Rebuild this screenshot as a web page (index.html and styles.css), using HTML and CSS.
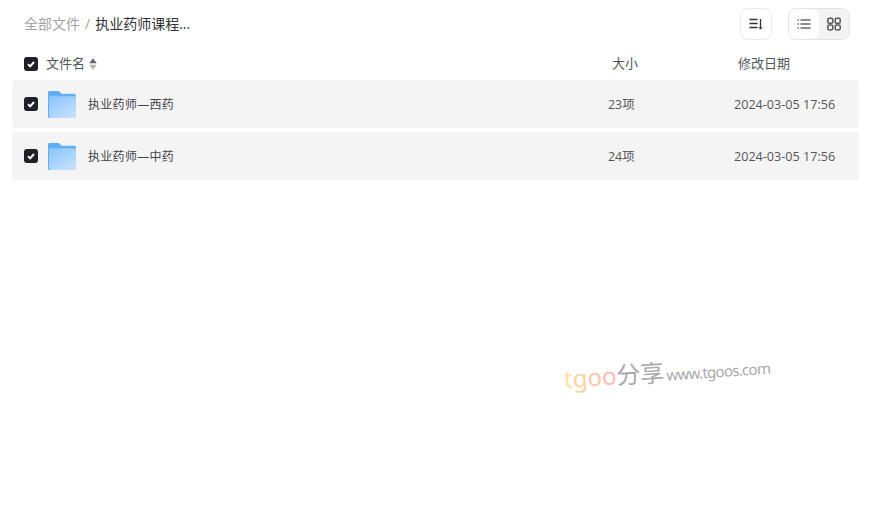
FILE: index.html
```html
<!DOCTYPE html>
<html lang="zh-CN">
<head>
<meta charset="utf-8">
<title>执业药师课程</title>
<link rel="stylesheet" href="styles.css">
</head>
<body>
<main class="page">
  <header class="toolbar">
    <nav class="crumbs">
      <span class="crumb-root">全部文件</span>
      <span class="crumb-sep">/</span>
      <span class="crumb-current">执业药师课程...</span>
    </nav>
    <div class="tools">
      <button class="tool-btn">
        <svg width="16" height="16" viewBox="0 0 16 16" fill="none" stroke="#33333b" stroke-width="1.3"><path d="M1.500 3.500h8M1.500 7.500h8M1.500 11.500h8"/><path d="M12.500 3v10"/><path d="M10.800 11.200 12.500 13.200 14.200 11.200" stroke-width="1"/></svg>
      </button>
      <div class="view-group">
        <span class="view-item view-on">
          <svg width="14" height="14" viewBox="0 0 14 14" fill="none" stroke="#1f1f27" stroke-width="1.2"><path d="M3.500 3h10M3.500 7h10M3.500 11h10"/><path d="M.5 3h1.500M.5 7h1.500M.5 11h1.500"/></svg>
        </span>
        <span class="view-item">
          <svg width="14" height="14" viewBox="0 0 14 14" fill="none" stroke="#55555b" stroke-width="1.500"><rect x=".8" y="1.300" width="5" height="5" rx="1.400"/><rect x="8.200" y="1.300" width="5" height="5" rx="1.400"/><rect x=".8" y="7.900" width="5" height="5" rx="1.400"/><rect x="8.200" y="7.900" width="5" height="5" rx="1.400"/></svg>
        </span>
      </div>
    </div>
  </header>

  <section class="list">
    <div class="list-head">
      <span class="check"><svg width="10" height="10" viewBox="0 0 10 10" fill="none" stroke="#fff" stroke-width="2"><path d="M2 5.200 4.200 7.300 8 3"/></svg></span>
      <span class="col-name"><span class="head-text">文件名</span>
        <svg class="sort" width="8" height="12" viewBox="0 0 8 12"><path d="M4 .3 7.800 5.300H.2z" fill="#66666c"/><path d="M4 11.700 .2 6.700h7.600z" fill="#b4b4b8"/></svg>
      </span>
      <span class="col-size head-text">大小</span>
      <span class="col-date head-text">修改日期</span>
    </div>

    <div class="row">
      <span class="check"><svg width="10" height="10" viewBox="0 0 10 10" fill="none" stroke="#fff" stroke-width="2"><path d="M2 5.200 4.200 7.300 8 3"/></svg></span>
      <svg class="folder" width="30" height="28" viewBox="0 0 30 28">
        <use href="#folder-shape"/>
      </svg>
      <span class="row-name">执业药师—西药</span>
      <span class="row-size">23项</span>
      <span class="row-date">2024-03-05 17:56</span>
    </div>

    <div class="row">
      <span class="check"><svg width="10" height="10" viewBox="0 0 10 10" fill="none" stroke="#fff" stroke-width="2"><path d="M2 5.200 4.200 7.300 8 3"/></svg></span>
      <svg class="folder" width="30" height="28" viewBox="0 0 30 28">
        <use href="#folder-shape"/>
      </svg>
      <span class="row-name">执业药师—中药</span>
      <span class="row-size">24项</span>
      <span class="row-date">2024-03-05 17:56</span>
    </div>
  </section>

  <svg width="0" height="0" class="defs">
    <defs>
      <linearGradient id="folder-front" x1="0.15" y1="0" x2="0.85" y2="1">
        <stop offset="0" stop-color="#8cc6fb"/>
        <stop offset="1" stop-color="#c4e2fe"/>
      </linearGradient>
      <g id="folder-shape">
        <path d="M1 2.500Q1 1 2.500 1H11Q12.300 1 13 2L14.500 3.800H27Q29 3.800 29 5.500V10H1Z" fill="#62aef2"/>
        <path d="M1 6.300H27.500Q29 6.300 29 8V26.500Q29 28 27.500 28H2.500Q1 28 1 26.500Z" fill="url(#folder-front)"/>
        <path d="M1 6.300V26.500Q1 28 2.500 28H4Q2 28 2 26V6.300Z" fill="#62aef2"/>
      </g>
    </defs>
  </svg>

  <div class="watermark"><span class="wm-t">t</span><span class="wm-g">g</span><span class="wm-o1">o</span><span class="wm-o2">o</span><span class="wm-cn">分享</span><span class="wm-url">www.tgoos.com</span></div>
</main>
</body>
</html>
```

FILE: styles.css
```css
* { box-sizing: border-box; }
html, body { margin: 0; height: 100%; background: #fff; }
body {
  font-family: "Open Sans", "Noto Sans CJK SC", sans-serif;
  color: #33333b;
  overflow: hidden;
}
.page { position: relative; width: 874px; height: 514px; padding: 8px 15px 0 12px; }
.defs { position: absolute; }

.toolbar { display: flex; align-items: center; justify-content: space-between; height: 32px; padding: 0 9px 0 12px; }
.crumbs { display: flex; align-items: center; gap: 5px; font-size: 14px; line-height: 32px; }
.crumb-root { color: #a3a3a6; }
.crumb-sep { color: #a3a3a6; }
.crumb-current { color: #33333b; }
.tools { display: flex; gap: 16px; }
.tool-btn {
  display: flex; align-items: center; justify-content: center;
  width: 32px; height: 32px; padding: 0; background: #fff;
  border: 1px solid #e8e8ea; border-radius: 8px;
}
.view-group {
  display: flex; width: 62px; height: 32px; overflow: hidden;
  background: #f3f3f4; border: 1px solid #e4e4e6; border-radius: 8px;
}
.view-item { display: flex; align-items: center; justify-content: center; width: 30px; }
.view-on { background: #fff; border-radius: 0 8px 8px 0; }

.list { margin-top: 8px; }
.check {
  display: flex; align-items: center; justify-content: center; flex: none;
  width: 14px; height: 14px; background: #1f1f27; border-radius: 3px;
}
.list-head { display: flex; align-items: center; height: 32px; padding-left: 12px; font-size: 13px; color: #55555c; }
.head-text { line-height: 30px; height: 32px; }
.col-name { display: flex; align-items: center; gap: 4px; margin-left: 8px; width: 566px; }
.col-size { width: 126px; }
.row {
  display: flex; align-items: center; height: 48px; margin-bottom: 4px;
  padding-left: 12px; background: #f4f4f4; border-radius: 4px; font-size: 12px; color: #55555c;
}
.folder { flex: none; margin-left: 9px; }
.row-name { width: 520px; margin-left: 11px; color: #44444c; letter-spacing: 0.3px; }
.row-size { width: 126px; font-size: 12.4px; }
.row-date { font-size: 12.6px; }

.watermark {
  position: absolute; left: 565px; top: 360px; display: flex; align-items: baseline;
  white-space: nowrap; transform: rotate(-4deg); transform-origin: left bottom;
  font-family: "Noto Sans", "Noto Sans CJK SC", sans-serif; color: #a9a9ab;
}
.wm-t { font-size: 24px; color: #fde2a0; }
.wm-g { font-size: 24px; color: #fdd3a0; }
.wm-o1 { font-size: 24px; color: #fdc8ab; }
.wm-o2 { font-size: 24px; color: #fcbcb0; }
.wm-cn { font-size: 24px; }
.wm-url { font-size: 15px; margin-left: 2px; letter-spacing: -0.7px; }
```
